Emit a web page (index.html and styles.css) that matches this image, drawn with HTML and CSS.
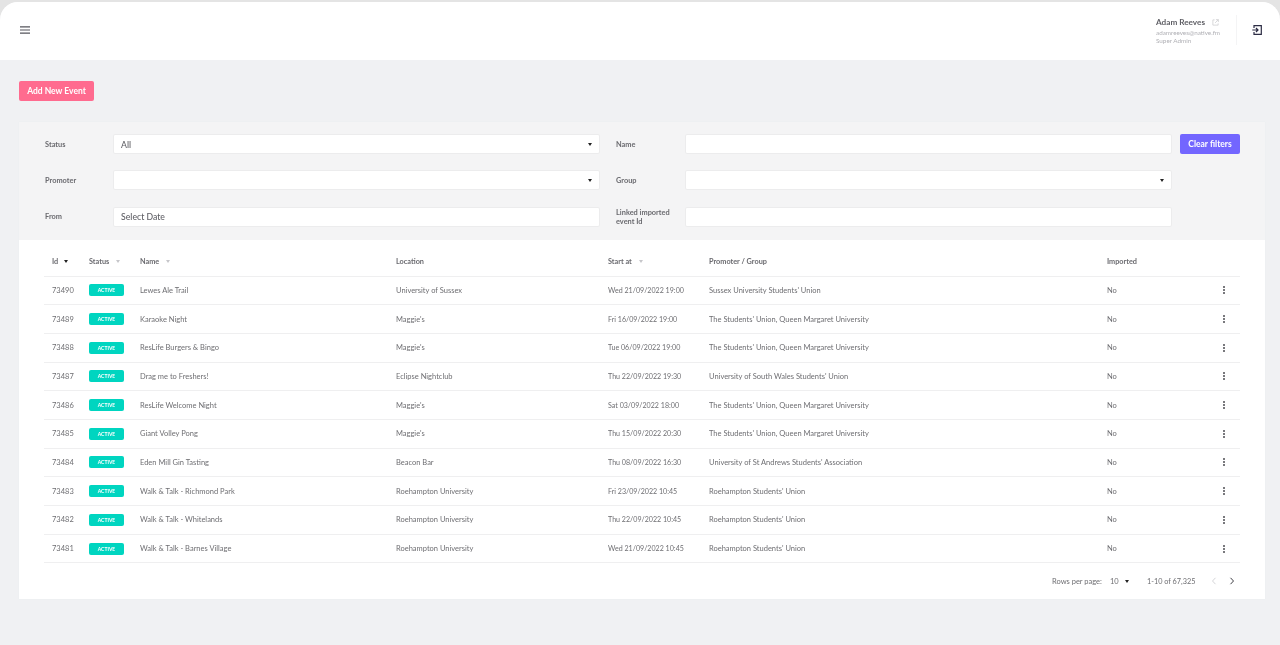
FILE: index.html
```html
<!DOCTYPE html>
<html lang="en">
<head>
<meta charset="utf-8">
<title>Events</title>
<link rel="stylesheet" href="styles.css">
</head>
<body>
<div class="app">
  <header class="topbar">
    <svg class="menu" viewBox="0 0 10 8"><path d="M0 .9h10M0 4h10M0 7.100h10"/></svg>
    <div class="user">
      <div class="user-name">Adam Reeves <svg class="ext" viewBox="0 0 8 8"><path d="M3 1H1v6h6V5M4.500 .7h2.800v2.800M7.200 .8 3.500 4.500"/></svg></div>
      <div class="user-sub">adamreeves@native.fm</div>
      <div class="user-sub">Super Admin</div>
    </div>
    <div class="divider"></div>
    <svg class="logout" viewBox="0 0 10 10"><path d="M2 3V.7h7.300v8.600H2V7M.3 5h5.500M4 3l2 2-2 2"/></svg>
  </header>
  <main class="content">
    <button class="btn btn-pink">Add New Event</button>
    <section class="card">
      <div class="filters">
        <label class="flabel">Status</label>
        <div class="field select first">All<i class="caret"></i></div>
        <span></span>
        <label class="flabel">Name</label>
        <div class="field"></div>
        <span></span>
        <button class="btn btn-purple">Clear filters</button>

        <label class="flabel">Promoter</label>
        <div class="field select"><i class="caret"></i></div>
        <span></span>
        <label class="flabel">Group</label>
        <div class="field select"><i class="caret"></i></div>
        <span></span><span></span>

        <label class="flabel">From</label>
        <div class="field">Select Date</div>
        <span></span>
        <label class="flabel">Linked imported event Id</label>
        <div class="field"></div>
        <span></span><span></span>
      </div>
      <div class="table-wrap">
        <table class="events">
          <colgroup><col class="c-id"><col class="c-status"><col class="c-name"><col class="c-loc"><col class="c-start"><col class="c-prom"><col class="c-imp"><col class="c-act"></colgroup>
          <thead>
            <tr>
              <th>Id <i class="caret dark"></i></th>
              <th>Status <i class="caret faint"></i></th>
              <th>Name <i class="caret faint"></i></th>
              <th>Location</th>
              <th>Start at <i class="caret faint"></i></th>
              <th>Promoter / Group</th>
              <th>Imported</th>
              <th></th>
            </tr>
          </thead>
          <tbody>
            <tr><td>73490</td><td><span class="badge">ACTIVE</span></td><td>Lewes Ale Trail</td><td>University of Sussex</td><td>Wed 21/09/2022 19:00</td><td>Sussex University Students' Union</td><td>No</td><td class="dots"><i></i></td></tr>
            <tr><td>73489</td><td><span class="badge">ACTIVE</span></td><td>Karaoke Night</td><td>Maggie's</td><td>Fri 16/09/2022 19:00</td><td>The Students' Union, Queen Margaret University</td><td>No</td><td class="dots"><i></i></td></tr>
            <tr><td>73488</td><td><span class="badge">ACTIVE</span></td><td>ResLife Burgers &amp; Bingo</td><td>Maggie's</td><td>Tue 06/09/2022 19:00</td><td>The Students' Union, Queen Margaret University</td><td>No</td><td class="dots"><i></i></td></tr>
            <tr><td>73487</td><td><span class="badge">ACTIVE</span></td><td>Drag me to Freshers!</td><td>Eclipse Nightclub</td><td>Thu 22/09/2022 19:30</td><td>University of South Wales Students' Union</td><td>No</td><td class="dots"><i></i></td></tr>
            <tr><td>73486</td><td><span class="badge">ACTIVE</span></td><td>ResLife Welcome Night</td><td>Maggie's</td><td>Sat 03/09/2022 18:00</td><td>The Students' Union, Queen Margaret University</td><td>No</td><td class="dots"><i></i></td></tr>
            <tr><td>73485</td><td><span class="badge">ACTIVE</span></td><td>Giant Volley Pong</td><td>Maggie's</td><td>Thu 15/09/2022 20:30</td><td>The Students' Union, Queen Margaret University</td><td>No</td><td class="dots"><i></i></td></tr>
            <tr><td>73484</td><td><span class="badge">ACTIVE</span></td><td>Eden Mill Gin Tasting</td><td>Beacon Bar</td><td>Thu 08/09/2022 16:30</td><td>University of St Andrews Students' Association</td><td>No</td><td class="dots"><i></i></td></tr>
            <tr><td>73483</td><td><span class="badge">ACTIVE</span></td><td>Walk &amp; Talk - Richmond Park</td><td>Roehampton University</td><td>Fri 23/09/2022 10:45</td><td>Roehampton Students' Union</td><td>No</td><td class="dots"><i></i></td></tr>
            <tr><td>73482</td><td><span class="badge">ACTIVE</span></td><td>Walk &amp; Talk - Whitelands</td><td>Roehampton University</td><td>Thu 22/09/2022 10:45</td><td>Roehampton Students' Union</td><td>No</td><td class="dots"><i></i></td></tr>
            <tr><td>73481</td><td><span class="badge">ACTIVE</span></td><td>Walk &amp; Talk - Barnes Village</td><td>Roehampton University</td><td>Wed 21/09/2022 10:45</td><td>Roehampton Students' Union</td><td>No</td><td class="dots"><i></i></td></tr>
          </tbody>
        </table>
        <div class="pager">
          <span class="rows-label">Rows per page:</span>
          <span class="rows-val">10 <i class="caret dark"></i></span>
          <span class="range">1-10 of 67,325</span>
          <svg class="chev off" viewBox="0 0 6 8"><path d="M4.500 .8 1.500 4l3 3.200"/></svg>
          <svg class="chev" viewBox="0 0 6 8"><path d="M1.500 .8 4.500 4l-3 3.200"/></svg>
        </div>
      </div>
    </section>
  </main>
</div>
</body>
</html>
```

FILE: styles.css
```css
* { box-sizing: border-box; }
html, body { margin: 0; height: 645px; overflow: hidden; }
body {
  background: #e4e4e4;
  padding-top: 2px;
  font-family: "Lato", "Open Sans", sans-serif;
  color: #6e6e72;
  font-size: 7.500px;
}
.app {
  height: 643px;
  background: #f0f1f3;
  border-radius: 18px 18px 0 0;
  overflow: hidden;
  filter: blur(0.35px);
}
.topbar {
  height: 58px;
  background: #fff;
  display: flex;
  align-items: center;
  padding: 0 0 2px 20px;
}
.menu { width: 10px; height: 8px; fill: none; stroke: #55555c; stroke-width: 1.100; }
.user { margin-left: auto; width: 80px; margin-top: 1px; }
.user-name { font-size: 8.200px; font-weight: 700; color: #5f5f65; line-height: 12px; display: flex; align-items: center; gap: 7px; }
.ext { width: 7px; height: 7px; fill: none; stroke: #c8c8cc; stroke-width: .8; }
.user-sub { font-size: 6.300px; color: #b0b0b5; line-height: 8px; }
.user-name + .user-sub { margin-top: 1px; }
.divider { width: 1px; height: 30px; background: #f4f4f5; }
.logout { width: 10px; height: 10px; margin-left: 15px; margin-right: 18px; fill: none; stroke: #2c2c44; stroke-width: 1.200; }
.content { padding: 21px 15px 0 19px; }
.btn {
  display: block;
  border: 0;
  border-radius: 2px;
  color: #fff;
  font-family: inherit;
  font-weight: 700;
  height: 20px;
  padding: 0;
  font-size: 8.500px;
}
.btn-pink { background: #ff6b8f; width: 75px; }
.btn-purple { background: #7366ff; width: 60px; }
.card { margin-top: 21px; background: #fff; height: 477px; box-shadow: 0 0 1px #e8e9ea; }
.filters {
  background: #f4f4f5;
  height: 118px;
  padding: 12px 25px 0 26px;
  display: grid;
  grid-template-columns: 68px 487px 16px 69px 487px 8px 60px;
  grid-auto-rows: 20px;
  row-gap: 16.300px;
  align-items: center;
}
.flabel { font-weight: 700; font-size: 7.400px; color: #6a6a6f; line-height: 9.500px; padding-top: 1px; }
.field {
  height: 20px;
  background: #fff;
  border: 1px solid #ececed;
  border-radius: 2px;
  display: flex;
  align-items: center;
  justify-content: space-between;
  padding: 0 7px;
  font-size: 8.700px;
  font-weight: 500;
  color: #5f5f65;
}
.field.select { padding-right: 7px; }
.caret {
  display: inline-block;
  width: 0;
  height: 0;
  border-left: 2.500px solid transparent;
  border-right: 2.500px solid transparent;
  border-top: 3px solid #222;
  vertical-align: middle;
}
.field .caret { margin-left: auto; }
.caret.faint { border-top-color: #c6c6ca; margin-left: 5px; }
.caret.dark { border-top-color: #222; margin-left: 4px; }
.table-wrap { padding: 7px 25px 0 25px; }
.events { width: 1196px; border-collapse: collapse; table-layout: fixed; }
.c-id { width: 45px; } .c-status { width: 51px; } .c-name { width: 256px; } .c-loc { width: 212px; }
.c-start { width: 101px; } .c-prom { width: 398px; } .c-imp { width: 100px; } .c-act { width: 33px; }
.events th {
  height: 29px;
  text-align: left;
  font-weight: 700;
  font-size: 7.300px;
  color: #6a6a6f;
  padding: 0;
  border-bottom: 1px solid #efeff0;
}
.events td {
  height: 28.700px;
  padding: 0;
  border-bottom: 1px solid #efeff0;
  white-space: nowrap;
}
.events td:nth-child(5) { font-size: 7.100px; }
.events th:first-child, .events td:first-child { padding-left: 8px; }
.badge {
  display: block;
  width: 35px;
  height: 12px;
  line-height: 12px;
  background: #00d5c0;
  color: #fff;
  border-radius: 2px;
  text-align: center;
  font-size: 5px;
  font-weight: 700;
}
.dots i, .dots i::before, .dots i::after {
  display: block;
  width: 2px;
  height: 2px;
  background: #4c4c52;
  border-radius: 50%;
}
.dots i { position: relative; margin-left: 15.500px; }
.dots i::before, .dots i::after { content: ""; position: absolute; left: 0; }
.dots i::before { top: -3px; }
.dots i::after { top: 3px; }
.pager { display: flex; align-items: center; height: 36px; padding-left: 1008px; }
.rows-label { width: 58px; }
.rows-val { width: 37px; }
.range { width: 67px; white-space: nowrap; font-size: 7.300px; }
.chev { width: 6px; height: 8px; fill: none; stroke: #3f3f45; stroke-width: 1; }
.chev.off { stroke: #d4d4d7; margin-right: 12px; margin-left: -3px; }
```
